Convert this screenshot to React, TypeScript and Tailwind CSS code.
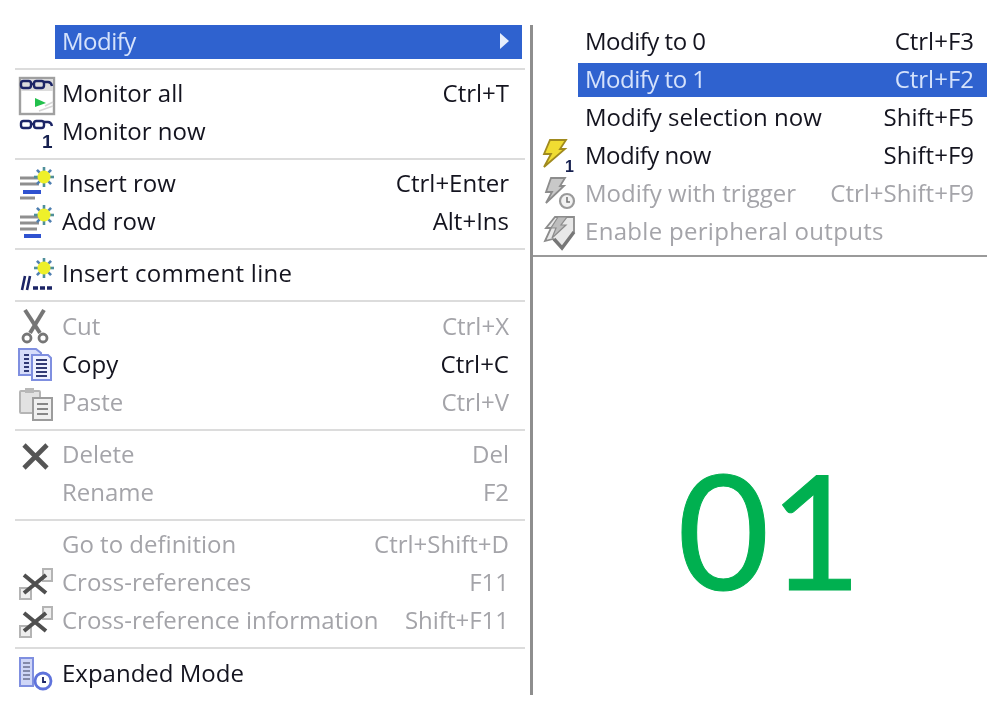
import React from "react";

const NAVY = "#1c2566";

function Star({ cx, cy }: { cx: number; cy: number }) {
  const rays = [0, 45, 90, 135];
  return (
    <g>
      {rays.map((a) => (
        <line key={a} x1={cx - 10} y1={cy} x2={cx + 10} y2={cy} stroke={a % 90 === 0 ? "#4f8f9a" : "#4f7fb0"} strokeWidth="2.6" transform={`rotate(${a} ${cx} ${cy})`} />
      ))}
      <circle cx={cx} cy={cy} r="6.5" fill="#eef02a" />
    </g>
  );
}

function Glasses({ y }: { y: number }) {
  return (
    <g fill="none" stroke={NAVY} strokeWidth="2.4">
      <rect x="6" y={y} width="10" height="7" rx="2.5" />
      <rect x="19" y={y} width="10" height="7" rx="2.5" />
      <path d={`M16 ${y + 3} h3 M29 ${y + 1} h4 q3 0 4 4`} />
    </g>
  );
}

const icons: Record<string, React.ReactNode> = {
  monitorAll: (
    <>
      <rect x="5" y="4" width="34" height="36" fill="#fff" stroke="#a0a0a0" strokeWidth="2.4" />
      <rect x="6" y="5" width="32" height="12" fill="#dcdcdc" />
      <Glasses y={7} />
      <path d="M20 24 L31 29 L20 33 Z" fill="#22c04c" />
      <path d="M30 32 L38 28 M24 37 L38 32" stroke="#d6d6d6" strokeWidth="1.6" />
    </>
  ),
  monitorNow: (
    <>
      <Glasses y={9} />
      <text x="27" y="36" fontSize="19" fontWeight="700" fill="#16204f" fontFamily="'Liberation Sans', sans-serif">1</text>
    </>
  ),
  insertRow: (
    <>
      <g stroke="#8f8f8f" strokeWidth="3">
        <line x1="5" y1="14" x2="24" y2="14" />
        <line x1="5" y1="20" x2="24" y2="20" />
        <line x1="5" y1="34" x2="20" y2="34" />
      </g>
      <rect x="8" y="26" width="18" height="4" fill="#2f52d0" />
      <Star cx={29} cy={13} />
    </>
  ),
  addRow: (
    <>
      <g stroke="#8f8f8f" strokeWidth="3">
        <line x1="5" y1="15" x2="24" y2="15" />
        <line x1="5" y1="21" x2="24" y2="21" />
        <line x1="5" y1="27" x2="22" y2="27" />
      </g>
      <rect x="9" y="32" width="17" height="4" fill="#2f52d0" />
      <Star cx={29} cy={13} />
    </>
  ),
  comment: (
    <>
      <Star cx={29} cy={14} />
      <path d="M10 22 L7 36 M15 22 L12 36" stroke={NAVY} strokeWidth="2.6" />
      <path d="M18 34 h5 M25 34 h5 M32 34 h5" stroke={NAVY} strokeWidth="3.5" />
    </>
  ),
  cut: (
    <g stroke="#767676" fill="none">
      <path d="M10 3 L25 26" strokeWidth="4" />
      <path d="M29 3 L15 26" strokeWidth="4" />
      <circle cx="12" cy="31" r="4" strokeWidth="2.8" />
      <circle cx="28" cy="31" r="4" strokeWidth="2.8" />
    </g>
  ),
  copy: (
    <>
      <path d="M4 4 H21 L26 8 V30 H4 Z" fill="#d6dcfa" stroke="#7f8fe0" strokeWidth="2" />
      <g stroke={NAVY} strokeWidth="1.8">
        <line x1="9" y1="10" x2="14" y2="10" /><line x1="9" y1="14" x2="14" y2="14" /><line x1="9" y1="18" x2="14" y2="18" /><line x1="9" y1="22" x2="14" y2="22" /><line x1="9" y1="26" x2="14" y2="26" />
      </g>
      <path d="M17 10 H33 L36 13 V35 H17 Z" fill="#eef1ff" stroke="#7f8fe0" strokeWidth="2" />
      <g stroke={NAVY} strokeWidth="1.8">
        <line x1="21" y1="15" x2="32" y2="15" /><line x1="21" y1="19" x2="32" y2="19" /><line x1="21" y1="23" x2="32" y2="23" /><line x1="21" y1="27" x2="32" y2="27" /><line x1="21" y1="31" x2="32" y2="31" />
      </g>
    </>
  ),
  paste: (
    <>
      <rect x="5" y="8" width="20" height="22" rx="1" fill="#e2e2e2" stroke="#b5b5b5" strokeWidth="2" />
      <rect x="10" y="5" width="9" height="5" fill="#b8b8b8" />
      <rect x="18" y="15" width="19" height="22" fill="#f0f0f0" stroke="#9c9c9c" strokeWidth="2" />
      <g stroke="#888" strokeWidth="2">
        <line x1="22" y1="21" x2="33" y2="21" /><line x1="22" y1="26" x2="33" y2="26" /><line x1="22" y1="31" x2="33" y2="31" />
      </g>
    </>
  ),
  del: <path d="M9 10 L32 33 M32 10 L9 33" stroke="#555" strokeWidth="4.6" />,
  cross: (
    <>
      <rect x="28" y="6" width="9" height="12" fill="#eee" stroke="#b4b4b4" strokeWidth="2" />
      <rect x="5" y="25" width="11" height="11" fill="#eee" stroke="#b4b4b4" strokeWidth="2" />
      <path d="M9 12 L31 30 M31 12 L9 30" stroke="#4f4f4f" strokeWidth="4" />
    </>
  ),
  expanded: (
    <>
      <rect x="5" y="4" width="13" height="28" fill="#cfd6f7" stroke="#7f8fe0" strokeWidth="2" />
      <g stroke="#6a6f90" strokeWidth="1.5">
        <line x1="8" y1="9" x2="15" y2="9" /><line x1="8" y1="13" x2="15" y2="13" /><line x1="8" y1="17" x2="15" y2="17" /><line x1="8" y1="21" x2="15" y2="21" /><line x1="8" y1="25" x2="15" y2="25" />
      </g>
      <circle cx="28" cy="27" r="8" fill="#fff" stroke="#5f73dc" strokeWidth="2.8" />
      <path d="M28 23 V28 H31" fill="none" stroke={NAVY} strokeWidth="1.8" />
    </>
  ),
  bolt: (
    <>
      <path d="M12 4 H28 L22 13 H27 L6 31 L13 18 H6 Z" fill="#f0dc32" stroke="#a08a1e" strokeWidth="1.8" />
      <text x="27" y="36" fontSize="16" fontWeight="700" fill="#16204f" fontFamily="'Liberation Sans', sans-serif">1</text>
    </>
  ),
  boltTrigger: (
    <>
      <path d="M13 4 H27 L22 12 H26 L8 29 L14 18 H8 Z" fill="#c8c8c8" stroke="#8c8c8c" strokeWidth="1.8" />
      <circle cx="29" cy="27" r="7" fill="#f2f2f2" stroke="#9a9a9a" strokeWidth="2.2" />
      <path d="M29 23 V28 H32" fill="none" stroke="#777" strokeWidth="1.6" />
    </>
  ),
  boltOutput: (
    <>
      <path d="M17 5 H36 V20 L24 36 L15 27 L7 29 L13 16 H8 Z" fill="#e8e8e8" stroke="#8c8c8c" strokeWidth="1.8" />
      <path d="M20 5 H29 L23 13 H28 L14 26 L18 16 H13 Z" fill="#bdbdbd" stroke="#8c8c8c" strokeWidth="1.2" />
      <path d="M16 27 L24 36 L36 20" fill="none" stroke="#777" strokeWidth="3.4" />
    </>
  ),
};

function Icon({ name }: { name?: string }) {
  return (
    <span className="block h-[38px] w-[40px] shrink-0">
      {name && (
        <svg width="40" height="38" viewBox="0 0 40 38" className="block overflow-visible">
          {icons[name]}
        </svg>
      )}
    </span>
  );
}

function Row({ label, shortcut, icon, off, active, arrow, tight, wide }: { label: string; shortcut?: string; icon?: string; off?: boolean; active?: boolean; arrow?: boolean; tight?: boolean; wide?: boolean }) {
  const tone = active ? "bg-[#2f62cf] text-[#d5e2fb]" : off ? "text-[#a4a4a9]" : "text-[#14141f]";
  const spacing = tight ? "tracking-[-0.5px]" : wide ? "tracking-[0.3px]" : "";
  return (
    <div className="flex h-[38px] items-center">
      <Icon name={icon} />
      <div className={`mt-[2px] box-border flex h-[34px] flex-1 items-center justify-between pb-[2px] pl-[7px] pr-[13px] ${tone}`}>
        <span className={`whitespace-nowrap ${spacing}`}>{label}</span>
        {shortcut && <span className="whitespace-nowrap">{shortcut}</span>}
        {arrow && <span className="h-0 w-0 border-y-[8px] border-l-[9px] border-y-transparent border-l-[#e6eefc]" />}
      </div>
    </div>
  );
}

function Sep({ tall }: { tall?: boolean }) {
  return (
    <div className={tall ? "h-[15px] pt-[8px]" : "h-[14px] pt-[8px]"}>
      <div className="h-[2px] w-[510px] bg-[#dcdcdc]" />
    </div>
  );
}

export default function App() {
  return (
    <div className="flex h-[728px] w-[1000px] overflow-hidden bg-white font-['Open_Sans',sans-serif] text-[24px] leading-[30px] blur-[0.5px]">
      <div className="ml-[15px] mr-[-7px] w-[522px] shrink-0 pt-[22px] [&>div]:w-[507px]">
        <Row label="Modify" active arrow tight />
        <Sep />
        <Row label="Monitor all" shortcut="Ctrl+T" icon="monitorAll" />
        <Row label="Monitor now" icon="monitorNow" />
        <Sep />
        <Row label="Insert row" shortcut="Ctrl+Enter" icon="insertRow" />
        <Row label="Add row" shortcut="Alt+Ins" icon="addRow" />
        <Sep />
        <Row label="Insert comment line" icon="comment" wide />
        <Sep tall />
        <Row label="Cut" shortcut="Ctrl+X" icon="cut" off />
        <Row label="Copy" shortcut="Ctrl+C" icon="copy" />
        <Row label="Paste" shortcut="Ctrl+V" icon="paste" off />
        <Sep />
        <Row label="Delete" shortcut="Del" icon="del" off />
        <Row label="Rename" shortcut="F2" off />
        <Sep />
        <Row label="Go to definition" shortcut="Ctrl+Shift+D" off />
        <Row label="Cross-references" shortcut="F11" icon="cross" off />
        <Row label="Cross-reference information" shortcut="Shift+F11" icon="cross" off />
        <Sep tall />
        <Row label="Expanded Mode" icon="expanded" />
      </div>
      <div className="mt-[25px] h-[670px] w-[3px] shrink-0 bg-[#8e8e8e]" />
      <div className="flex w-[454px] shrink-0 flex-col pt-[22px]">
        <div className="pl-[5px]">
          <Row label="Modify to 0" shortcut="Ctrl+F3" tight />
          <Row label="Modify to 1" shortcut="Ctrl+F2" active tight />
          <Row label="Modify selection now" shortcut="Shift+F5" />
          <Row label="Modify now" shortcut="Shift+F9" icon="bolt" tight />
          <Row label="Modify with trigger" shortcut="Ctrl+Shift+F9" icon="boltTrigger" off />
          <Row label="Enable peripheral outputs" icon="boltOutput" off wide />
        </div>
        <div className="mt-[5px] h-[2px] bg-[#9a9a9a]" />
        <div className="flex flex-1 justify-center pl-[19px] pt-[192px]">
          <span className="font-['Lato',sans-serif] text-[159px] leading-[159px] text-[#00b050] [-webkit-text-stroke:1px_#00b050]">01</span>
        </div>
      </div>
    </div>
  );
}
